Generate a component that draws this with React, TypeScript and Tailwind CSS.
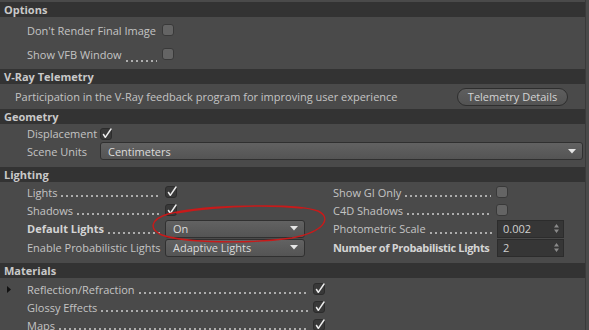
import React from "react";

const FONT = { fontFamily: '"Open Sans", "Noto Sans", sans-serif' };

function Dots() {
  return (
    <span className="flex-1 self-end mb-[4px] ml-[4px] mr-[5px] h-[2px] bg-[radial-gradient(circle_at_1px_1px,#adadad_0.75px,transparent_1.05px)] [background-size:5px_2px] bg-repeat-x" />
  );
}

function Check({ on }: { on?: boolean }) {
  if (on) {
    return (
      <div className="relative w-[12px] h-[12px] rounded-[3px] bg-[#383838] border border-[#2c2c2c] shrink-0">
        <svg width="12" height="13" viewBox="0 0 12 13" className="absolute left-[0px] -top-[2px]">
          <path d="M2.5 7.5 L4.3 10.3 L10 2" fill="none" stroke="#ececec" strokeWidth="1.5" strokeLinecap="round" strokeLinejoin="round" />
        </svg>
      </div>
    );
  }
  return <div className="w-[12px] h-[12px] rounded-[3px] bg-[#646464] border border-[#393939] shrink-0" />;
}

function Header({ title }: { title: string }) {
  return (
    <div className="h-[15px] bg-[#333333] flex items-center px-[4px] text-[11px] font-bold text-[#c9c9c9] leading-none">
      {title}
    </div>
  );
}

function Dropdown({ value, className }: { value: string; className: string }) {
  return (
    <div className={`h-[18px] rounded-[3px] border border-[#303030] bg-gradient-to-b from-[#626262] to-[#545454] flex items-center pl-[7px] pr-[6px] text-[11px] text-[#dcdcdc] ${className}`}>
      <span className="flex-1">{value}</span>
      <svg width="8" height="5" viewBox="0 0 8 5">
        <path d="M0 0 H8 L4 4.5 Z" fill="#e6e6e6" />
      </svg>
    </div>
  );
}

function NumField({ value }: { value: string }) {
  return (
    <div className="w-[67px] h-[18px] bg-[#363636] border border-[#2c2c2c] flex items-center pl-[5px] pr-[4px] text-[11px] text-[#d0d0d0]">
      <span className="flex-1">{value}</span>
      <svg width="5" height="9" viewBox="0 0 5 9">
        <path d="M0 3.5 L2.5 0 L5 3.5 Z M0 5.5 L2.5 9 L5 5.5 Z" fill="#8a8a8a" />
      </svg>
    </div>
  );
}

function Row({ label, bold, dots = true, width, children, h = "h-[18px]", tight }: { label: string; bold?: boolean; dots?: boolean; width: string; children: React.ReactNode; h?: string; tight?: boolean }) {
  return (
    <div className={`flex items-center ${h}`}>
      <div className={`flex items-center h-full ${width} shrink-0 whitespace-nowrap ${bold ? "font-bold text-[#d4d4d4]" : "text-[#c4c4c4]"}`}>
        <span className={tight ? "tracking-[-0.35px]" : ""}>{label}</span>
        {dots ? <Dots /> : <span className="w-[3px]" />}
      </div>
      {children}
    </div>
  );
}

export default function App() {
  return (
    <div style={FONT} className="w-[589px] h-[330px] bg-[#4a4a4a] overflow-hidden relative text-[11px] leading-none">
      <div className="w-[586px] h-full border-r border-[#3a3a3a] pt-[2px]">
        <Header title="Options" />
        <div className="h-[52px] pt-[1px] pl-[27px]">
          <Row label="Don't Render Final Image" dots={false} width="w-[135px]" h="h-[24px]">
            <Check />
          </Row>
          <Row label="Show VFB Window" width="w-[135px]" h="h-[24px]">
            <Check />
          </Row>
        </div>

        <Header title="V-Ray Telemetry" />
        <div className="h-[25px] flex items-center pl-[15px] pr-[17px]">
          <span className="flex-1 text-[#c4c4c4]">Participation in the V-Ray feedback program for improving user experience</span>
          <div className="w-[111px] h-[18px] rounded-full border border-[#2e2e2e] bg-gradient-to-b from-[#5e5e5e] to-[#535353] flex items-center justify-center text-[#d4d4d4]">
            Telemetry Details
          </div>
        </div>

        <Header title="Geometry" />
        <div className="h-[43px] pl-[27px] pt-[1px]">
          <Row label="Displacement" dots={false} width="w-[73px]" h="h-[17px]">
            <Check on />
          </Row>
          <Row label="Scene Units" dots={false} width="w-[73px]" h="h-[18px]">
            <Dropdown value="Centimeters" className="flex-1 mr-[2px]" />
          </Row>
        </div>

        <Header title="Lighting" />
        <div className="h-[81px] pt-[1px] flex">
          <div className="pl-[27px] w-[333px]">
            <Row label="Lights" width="w-[138px]">
              <Check on />
            </Row>
            <Row label="Shadows" width="w-[138px]">
              <Check on />
            </Row>
            <Row label="Default Lights" bold width="w-[138px]" h="h-[19px]">
              <Dropdown value="On" className="w-[140px]" />
            </Row>
            <Row label="Enable Probabilistic Lights" dots={false} width="w-[138px]" h="h-[19px]">
              <Dropdown value="Adaptive Lights" className="w-[140px]" />
            </Row>
          </div>
          <div className="flex-1">
            <Row label="Show GI Only" width="w-[163px]">
              <Check />
            </Row>
            <Row label="C4D Shadows" width="w-[163px]">
              <Check />
            </Row>
            <Row label="Photometric Scale" width="w-[164px]" h="h-[19px]">
              <NumField value="0.002" />
            </Row>
            <Row label="Number of Probabilistic Lights" bold tight dots={false} width="w-[164px]" h="h-[19px]">
              <NumField value="2" />
            </Row>
          </div>
        </div>

        <Header title="Materials" />
        <div className="pt-[2px]">
          <div className="flex items-center h-[18px]">
            <div className="w-[27px] pl-[7px]">
              <svg width="4" height="7" viewBox="0 0 4 7"><path d="M0 0 L4 3.5 L0 7 Z" fill="#111" /></svg>
            </div>
            <Row label="Reflection/Refraction" width="w-[286px]">
              <Check on />
            </Row>
          </div>
          <div className="pl-[27px]">
            <Row label="Glossy Effects" width="w-[286px]">
              <Check on />
            </Row>
            <Row label="Maps" width="w-[286px]">
              <Check on />
            </Row>
          </div>
        </div>
      </div>

      <svg className="absolute left-0 top-0 pointer-events-none" width="589" height="330">
        <path
          d="M176 213 C220 205 295 203 318 211 C331 217 327 231 292 238 C250 244 185 243 162 235 C148 229 151 219 168 214 C200 206 265 204 302 208"
          fill="none"
          stroke="#c81a1a"
          strokeWidth="1.4"
        />
      </svg>
    </div>
  );
}
